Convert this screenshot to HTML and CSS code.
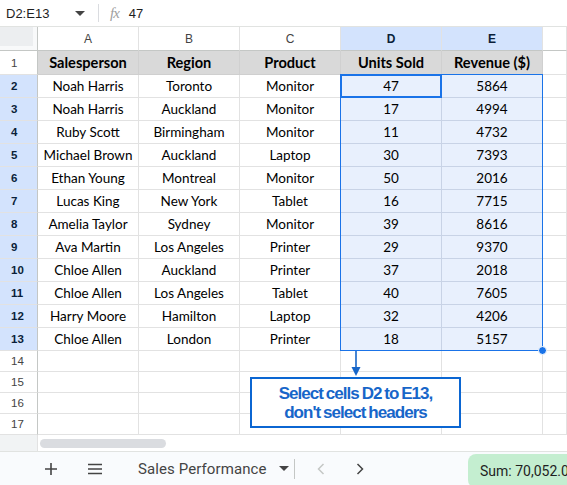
FILE: index.html
```html
<!DOCTYPE html>
<html>
<head>
<meta charset="utf-8">
<link rel="stylesheet" href="styles.css">
</head>
<body>
<div class="topbar">
  <div class="namebox">D2:E13</div>
  <svg class="caret" width="10" height="6" viewBox="0 0 10 6"><path d="M0 0 L10 0 L5 5 Z" fill="#444"/></svg>
  <div class="vsep"></div>
  <div class="fx">fx</div>
  <div class="formula">47</div>
</div>
<div class="sheet">
  <div class="grid">
    <div class="corner"></div>
    <div class="ch">A</div><div class="ch">B</div><div class="ch">C</div><div class="ch chs">D</div><div class="ch chs">E</div><div class="ch"></div>

    <div class="rh">1</div>
    <div class="c hd">Salesperson</div><div class="c hd">Region</div><div class="c hd">Product</div><div class="c hd">Units Sold</div><div class="c hd">Revenue ($)</div><div class="c"></div>

    <div class="rh rhs">2</div><div class="c">Noah Harris</div><div class="c">Toronto</div><div class="c">Monitor</div><div class="c s">47</div><div class="c s">5864</div><div class="c"></div>
    <div class="rh rhs">3</div><div class="c">Noah Harris</div><div class="c">Auckland</div><div class="c">Monitor</div><div class="c s">17</div><div class="c s">4994</div><div class="c"></div>
    <div class="rh rhs">4</div><div class="c">Ruby Scott</div><div class="c">Birmingham</div><div class="c">Monitor</div><div class="c s">11</div><div class="c s">4732</div><div class="c"></div>
    <div class="rh rhs">5</div><div class="c">Michael Brown</div><div class="c">Auckland</div><div class="c">Laptop</div><div class="c s">30</div><div class="c s">7393</div><div class="c"></div>
    <div class="rh rhs">6</div><div class="c">Ethan Young</div><div class="c">Montreal</div><div class="c">Monitor</div><div class="c s">50</div><div class="c s">2016</div><div class="c"></div>
    <div class="rh rhs">7</div><div class="c">Lucas King</div><div class="c">New York</div><div class="c">Tablet</div><div class="c s">16</div><div class="c s">7715</div><div class="c"></div>
    <div class="rh rhs">8</div><div class="c">Amelia Taylor</div><div class="c">Sydney</div><div class="c">Monitor</div><div class="c s">39</div><div class="c s">8616</div><div class="c"></div>
    <div class="rh rhs">9</div><div class="c">Ava Martin</div><div class="c">Los Angeles</div><div class="c">Printer</div><div class="c s">29</div><div class="c s">9370</div><div class="c"></div>
    <div class="rh rhs">10</div><div class="c">Chloe Allen</div><div class="c">Auckland</div><div class="c">Printer</div><div class="c s">37</div><div class="c s">2018</div><div class="c"></div>
    <div class="rh rhs">11</div><div class="c">Chloe Allen</div><div class="c">Los Angeles</div><div class="c">Tablet</div><div class="c s">40</div><div class="c s">7605</div><div class="c"></div>
    <div class="rh rhs">12</div><div class="c">Harry Moore</div><div class="c">Hamilton</div><div class="c">Laptop</div><div class="c s">32</div><div class="c s">4206</div><div class="c"></div>
    <div class="rh rhs">13</div><div class="c">Chloe Allen</div><div class="c">London</div><div class="c">Printer</div><div class="c s">18</div><div class="c s">5157</div><div class="c"></div>

    <div class="rh">14</div><div class="c"></div><div class="c"></div><div class="c"></div><div class="c"></div><div class="c"></div><div class="c"></div>
    <div class="rh">15</div><div class="c"></div><div class="c"></div><div class="c"></div><div class="c"></div><div class="c"></div><div class="c"></div>
    <div class="rh">16</div><div class="c"></div><div class="c"></div><div class="c"></div><div class="c"></div><div class="c"></div><div class="c"></div>
    <div class="rh">17</div><div class="c"></div><div class="c"></div><div class="c"></div><div class="c"></div><div class="c"></div><div class="c"></div>
  </div>

  <div class="selection"></div>
  <div class="active"></div>
  <div class="handle"></div>
  <svg class="arrow" width="10" height="26" viewBox="0 0 10 26"><path d="M5 0 V18" stroke="#1766c9" stroke-width="1.6"/><path d="M0.5 16 L9.5 16 L5 25 Z" fill="#1766c9"/></svg>
  <div class="note">Select cells D2 to E13,<br>don't select headers</div>

  <div class="hscroll">
    <div class="hs-left"></div>
    <div class="hs-track"><div class="thumb"></div></div>
  </div>
</div>
<div class="tabs">
  <svg class="ic-plus" width="14" height="14" viewBox="0 0 14 14"><path d="M7 1 V13 M1 7 H13" stroke="#444" stroke-width="1.6"/></svg>
  <svg class="ic-menu" width="16" height="12" viewBox="0 0 16 12"><path d="M1 1.5 H15 M1 6 H15 M1 10.5 H15" stroke="#444" stroke-width="1.5"/></svg>
  <div class="tabname">Sales Performance</div>
  <svg class="tabcaret" width="10" height="6" viewBox="0 0 10 6"><path d="M0 0 L10 0 L5 5 Z" fill="#444"/></svg>
  <div class="tsep"></div>
  <svg class="chev left" width="8" height="12" viewBox="0 0 8 12"><path d="M6.5 1 L1.5 6 L6.5 11" fill="none" stroke="#c4c7c5" stroke-width="1.5"/></svg>
  <svg class="chev right" width="8" height="12" viewBox="0 0 8 12"><path d="M1.5 1 L6.5 6 L1.5 11" fill="none" stroke="#444" stroke-width="1.5"/></svg>
  <div class="sum">Sum: 70,052.0</div>
</div>
</body>
</html>
```

FILE: styles.css
```css
* { box-sizing: border-box; }
html, body { margin: 0; padding: 0; }
body {
  width: 567px;
  height: 485px;
  overflow: hidden;
  background: #fff;
  font-family: "Liberation Sans", Arial, sans-serif;
  color: #000;
}

.topbar {
  height: 27px;
  border-bottom: 1px solid #e1e3e1;
  display: flex;
  align-items: center;
  font-size: 13px;
  color: #1f1f1f;
}
.namebox { width: 74px; padding-left: 6px; }
.caret { margin-left: 1px; margin-top: 1px; }
.vsep { width: 1px; height: 18px; background: #dadce0; margin-left: 13px; }
.fx {
  margin-left: 11px;
  font-family: "Liberation Serif", serif;
  font-style: italic;
  font-size: 15px;
  color: #a0a0a0;
  letter-spacing: -1px;
}
.formula { margin-left: 10px; }

.sheet { position: relative; }

.grid {
  display: grid;
  grid-template-columns: 38px repeat(5, 101px) 1fr;
  grid-template-rows: 24px 24px repeat(12, 23px) repeat(4, 21px);
}
.grid > div {
  border-right: 1px solid #e2e2e2;
  border-bottom: 1px solid #e2e2e2;
  display: flex;
  align-items: center;
  justify-content: center;
  white-space: nowrap;
  overflow: hidden;
}
.corner {
  background: #f8f9fa;
  box-shadow: inset -4px -4px 0 #f8f9fa, inset 0 0 0 40px #eceef0;
  border-right-color: #c4c7c5 !important;
  border-bottom-color: #c4c7c5 !important;
}
.ch {
  font-size: 12px;
  color: #444;
  border-bottom-color: #c4c7c5 !important;
}
.chs { background: #d3e3fd; color: #0b1f3a; font-weight: bold; }
.rh {
  font-size: 11.5px;
  color: #444;
  justify-content: flex-start !important;
  padding-left: 11px;
  border-right-color: #c4c7c5 !important;
}
.rhs { background: #d3e3fd; color: #0b1f3a; font-weight: bold; }
.c {
  font-family: Lato, "Open Sans", sans-serif;
  font-size: 13.5px;
  color: #000;
}
.hd {
  background: #d9d9d9;
  font-weight: bold;
  font-size: 14.6px;
  border-bottom-color: #cfcfcf !important;
  border-right-color: #d0d0d0 !important;
}
.s { background: #e8f0fd; border-right-color: #c8d3e6 !important; border-bottom-color: #c8d3e6 !important; }

.selection {
  position: absolute;
  left: 340px;
  top: 47px;
  width: 203px;
  height: 277px;
  border: 1px solid #1a73e8;
  pointer-events: none;
}
.active {
  position: absolute;
  left: 340px;
  top: 47px;
  width: 102px;
  height: 24px;
  border: 2px solid #1a73e8;
}
.handle {
  position: absolute;
  left: 538px;
  top: 319px;
  width: 9px;
  height: 9px;
  border-radius: 50%;
  background: #1a73e8;
  border: 1px solid #fff;
}
.arrow {
  position: absolute;
  left: 351px;
  top: 324px;
}
.note {
  position: absolute;
  left: 250px;
  top: 350px;
  width: 211px;
  height: 51px;
  border: 2px solid #0b66d2;
  background: #fff;
  color: #1766c9;
  font-family: "Liberation Sans", Arial, sans-serif;
  font-weight: bold;
  font-size: 17px;
  line-height: 19px;
  letter-spacing: -0.95px;
  word-spacing: -1px;
  text-align: center;
  display: flex;
  align-items: center;
  justify-content: center;
}

.hscroll {
  height: 16px;
  display: flex;
}
.hs-left { width: 38px; background: #f1f3f4; border-right: 1px solid #e2e2e2; }
.hs-track { flex: 1; position: relative; padding: 4px 0 0 2px; }
.thumb { width: 126px; height: 9px; border-radius: 5px; background: #dadce0; }

.tabs {
  height: 35px;
  border-top: 1px solid #e1e3e1;
  background: #f9fbfd;
  display: flex;
  align-items: center;
  font-family: Roboto, "Open Sans", sans-serif;
  color: #444;
  position: relative;
}
.ic-plus { margin-left: 44px; }
.ic-menu { margin-left: 29px; }
.tabname { margin-left: 35px; font-size: 15px; color: #444; letter-spacing: 0.1px; }
.tabcaret { margin-left: 12px; }
.tsep { width: 1px; height: 20px; background: #c4c7c5; margin-left: 5px; }
.chev.left { margin-left: 22px; }
.chev.right { margin-left: 31px; }
.sum {
  position: absolute;
  left: 468px;
  top: 2px;
  height: 34px;
  width: 99px;
  padding-left: 12px;
  background: #c4eed0;
  border-radius: 8px 0 0 8px;
  display: flex;
  align-items: center;
  font-size: 14px;
  color: #1f1f1f;
  white-space: nowrap;
  overflow: hidden;
}
```
